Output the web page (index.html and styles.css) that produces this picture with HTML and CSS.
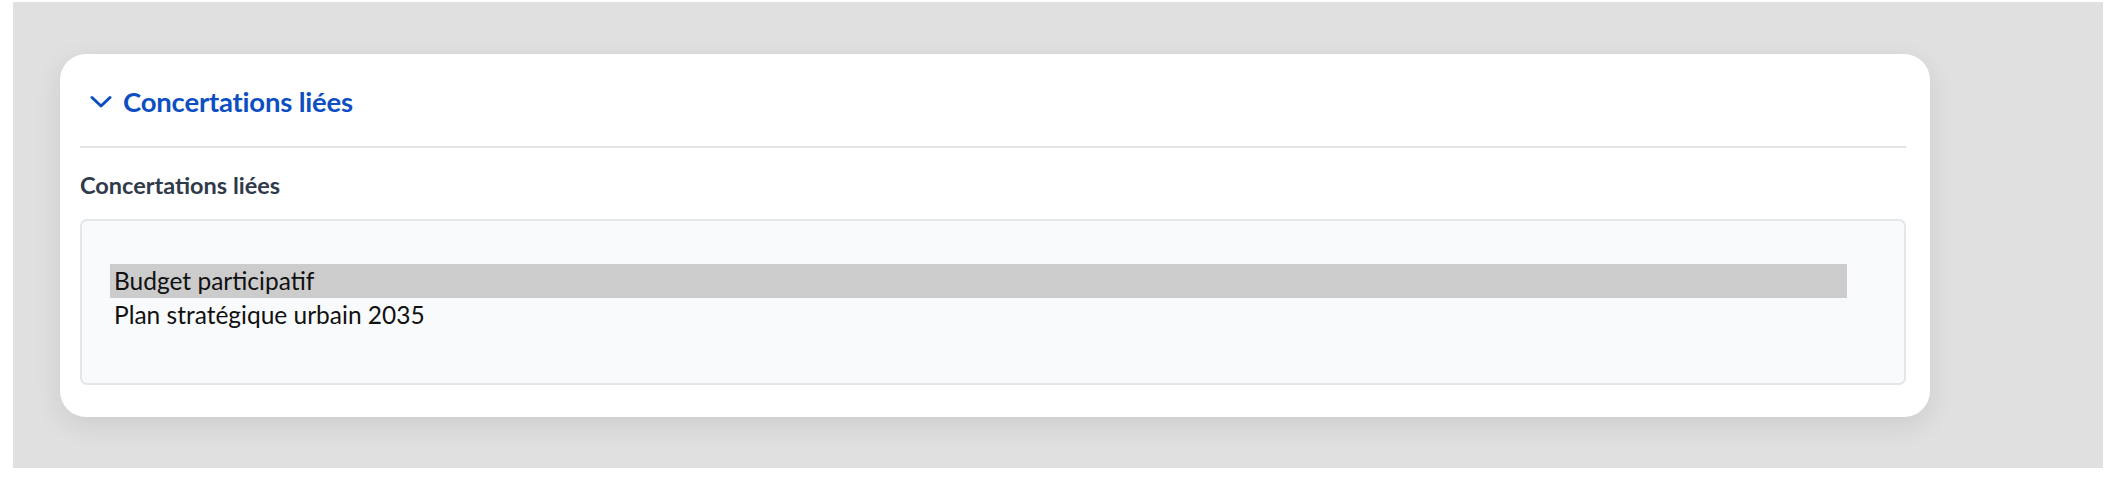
FILE: index.html
```html
<!DOCTYPE html>
<html lang="fr">
<head>
<meta charset="utf-8">
<title>Concertations liées</title>
<link rel="stylesheet" href="styles.css">
</head>
<body>
<div class="frame">
  <section class="card">
    <header class="card-header">
      <svg class="chevron" viewBox="0 0 22 14" width="22" height="14" aria-hidden="true">
        <path d="M2 2.5 L11 11 L20 2.5" fill="none" stroke="#0d4fc2" stroke-width="3" stroke-linecap="round" stroke-linejoin="round"/>
      </svg>
      <h2 class="card-title">Concertations liées</h2>
    </header>
    <div class="card-body">
      <div class="field-label">Concertations liées</div>
      <div class="listbox">
        <div class="list-inner">
          <div class="option selected">Budget participatif</div>
          <div class="option">Plan stratégique urbain 2035</div>
        </div>
      </div>
    </div>
  </section>
</div>
</body>
</html>
```

FILE: styles.css
```css
html, body {
  margin: 0;
  padding: 0;
  background: #ffffff;
}

body {
  font-family: Lato, "Noto Sans", sans-serif;
}

.frame {
  box-sizing: border-box;
  margin: 2px 1px 0 13px;
  height: 466px;
  background: #e0e0e0;
  padding: 52px 173px 0 47px;
}

.card {
  box-sizing: border-box;
  height: 363px;
  background: #ffffff;
  border-radius: 26px;
  padding: 0 24px 0 20px;
  box-shadow: 0 8px 28px rgba(0, 0, 0, 0.09);
}

.card-header {
  height: 94px;
  display: flex;
  align-items: center;
  gap: 11px;
  padding-left: 10px;
  padding-top: 2px;
  border-bottom: 2px solid #e4e4e6;
  box-sizing: border-box;
}

.chevron {
  display: block;
  margin-top: 2px;
}

.card-title {
  margin: 0;
  font-size: 27.5px;
  font-weight: 700;
  color: #0d4fc2;
  letter-spacing: -0.2px;
}

.card-body {
  padding-top: 23px;
}

.field-label {
  font-size: 23.5px;
  font-weight: 700;
  color: #2f3a4a;
  line-height: 28px;
}

.listbox {
  box-sizing: border-box;
  margin-top: 20px;
  height: 166px;
  background: #f9fafc;
  border: 2px solid #e4e6e9;
  border-radius: 7px;
  padding: 43px 57px 0 28px;
}

.option {
  height: 34px;
  line-height: 34px;
  font-size: 24.5px;
  color: #111111;
  padding-left: 4px;
}

.option.selected {
  background: #cccccc;
}
```
